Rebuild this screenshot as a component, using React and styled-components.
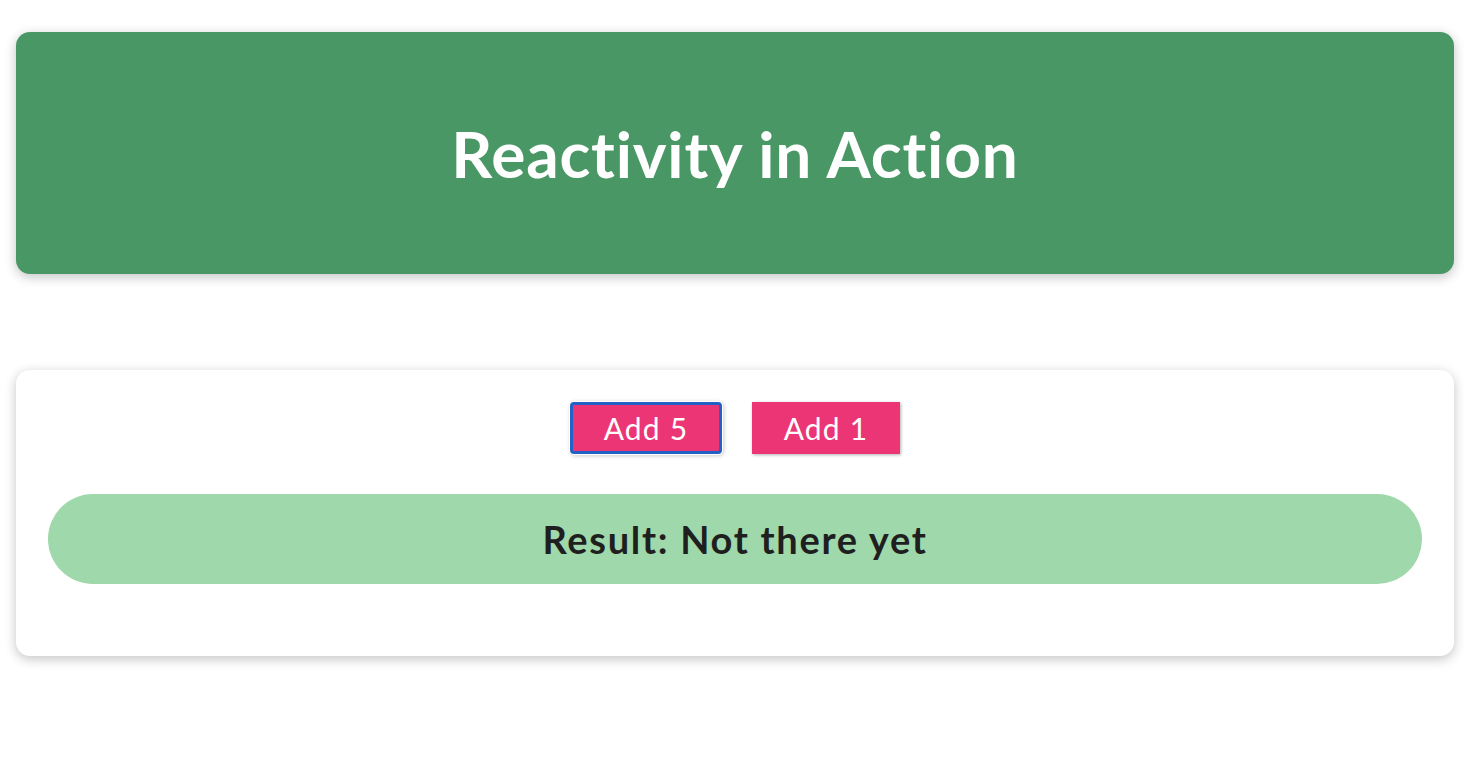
import React from 'react';
import styled, { createGlobalStyle } from 'styled-components';

const GlobalStyle = createGlobalStyle`
  * {
    box-sizing: border-box;
  }
  html {
    font-family: 'Lato', 'Open Sans', sans-serif;
  }
  body {
    margin: 0;
    background: #fff;
  }
`;

const Page = styled.div`
  padding: 32px 10px 40px 16px;
  display: flex;
  flex-direction: column;
  gap: 96px;
`;

const Header = styled.header`
  height: 242px;
  display: flex;
  align-items: center;
  justify-content: center;
  border-radius: 14px;
  background-color: #4a9766;
  color: #fff;
  box-shadow: 0 3px 12px rgba(0, 0, 0, 0.24);
`;

const Title = styled.h2`
  margin: 0;
  font-size: 64px;
  font-weight: 700;
  letter-spacing: 0.8px;
`;

const Card = styled.section`
  height: 286px;
  padding: 32px 32px 0;
  border-radius: 14px;
  background: #fff;
  box-shadow: 0 3px 12px rgba(0, 0, 0, 0.24);
  display: flex;
  flex-direction: column;
  align-items: center;
  gap: 40px;
`;

const Actions = styled.div`
  display: flex;
  gap: 30px;
`;

const Button = styled.button`
  width: ${(p) => (p.$focused ? '152px' : '148px')};
  height: 52px;
  font: inherit;
  font-size: 30px;
  letter-spacing: 1.2px;
  color: #fff;
  background-color: #ec3575;
  border: ${(p) => (p.$focused ? '3px solid #2461c6' : 'none')};
  border-radius: ${(p) => (p.$focused ? '4px' : '0')};
  outline: none;
  box-shadow: ${(p) =>
    p.$focused
      ? '0 0 0 1px #fff, 1px 1px 4px 1px rgba(0, 0, 0, 0.2)'
      : '1px 1px 3px rgba(0, 0, 0, 0.3)'};
  cursor: pointer;
  padding: 0;
`;

const Result = styled.p`
  margin: 0;
  align-self: stretch;
  height: 90px;
  display: flex;
  align-items: center;
  justify-content: center;
  border-radius: 45px;
  background-color: #9fd8aa;
  color: #1f1f1f;
  font-size: 38px;
  font-weight: 700;
  letter-spacing: 1.7px;
`;

export default function App() {
  return (
    <>
      <GlobalStyle />
      <Page>
        <Header>
          <Title>Reactivity in Action</Title>
        </Header>
        <Card>
          <Actions>
            <Button $focused>Add 5</Button>
            <Button>Add 1</Button>
          </Actions>
          <Result>Result: Not there yet</Result>
        </Card>
      </Page>
    </>
  );
}
